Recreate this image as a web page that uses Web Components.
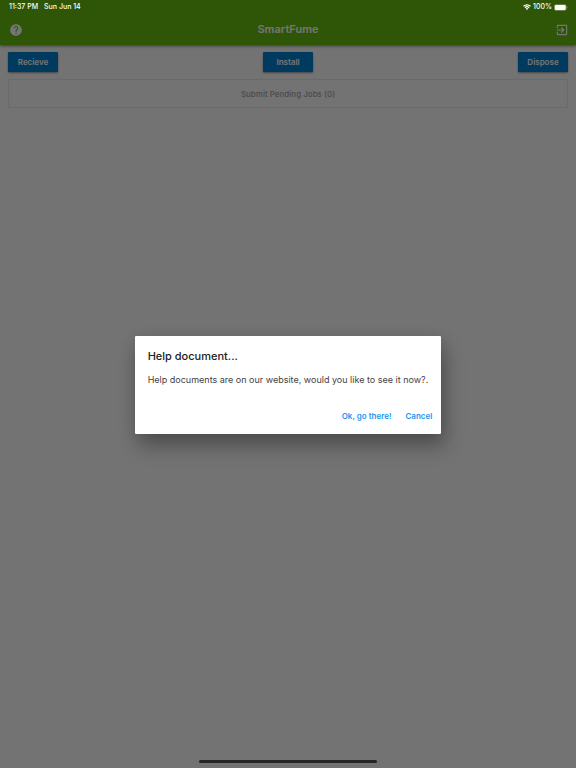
<!DOCTYPE html>
<html lang="en">
<head>
<meta charset="utf-8">
<meta name="viewport" content="width=device-width, initial-scale=1">
<title>SmartFume</title>
<style>
html, body { height: 100%; margin: 0; }
body { font-family: Inter, "Liberation Sans", sans-serif; font-size: 8px; background: #fafafa; }
</style>
</head>
<body>
<smart-app></smart-app>
<script>
function define(name, html) {
  const template = document.createElement('template');
  template.innerHTML = html;
  customElements.define(name, class extends HTMLElement {
    constructor() {
      super();
      this.attachShadow({ mode: 'open' }).append(template.content.cloneNode(true));
    }
  });
}

define('status-bar', `
<style>
:host { display: flex; justify-content: space-between; align-items: center; height: 14px; padding: 0 8px 0 9px; color: #fff; font-size: 7px; font-weight: 500; line-height: 14px; }
div { display: flex; align-items: center; gap: 6px; }
.right { gap: 2px; }
svg { display: block; }
</style>
<div><span>11:37 PM</span><span>Sun Jun 14</span></div>
<div class="right">
<svg width="8" height="6" viewBox="0 0 16 12" fill="none" stroke="#fff" stroke-width="2.4" aria-hidden="true"><path d="M1 4.500a10 10 0 0 1 14 0M3.800 7.400a6 6 0 0 1 8.400 0"/><path d="M8 12 5.400 9.300a3.800 3.800 0 0 1 5.200 0z" fill="#fff" stroke="none"/></svg>
<span>100%</span>
<svg width="14" height="7" viewBox="0 0 28 14" aria-hidden="true"><rect x=".5" y="1" width="24" height="12" rx="3.500" fill="none" stroke="#fff" stroke-opacity=".5"/><rect x="1.500" y="2" width="22" height="10" rx="2.500" fill="#fff"/><path d="M26 5q2 2 0 4z" fill="#fff" fill-opacity=".6"/></svg>
</div>`);

define('app-bar', `
<style>
:host { display: grid; grid-template-columns: 32px 1fr 32px; align-items: center; height: 31px; padding-top: 14px; background: #64bb0f; color: #fff; box-shadow: 0 1px 3px rgba(0,0,0,.5); }
h1 { margin: 0; font-size: 11px; line-height: 15px; font-weight: 600; text-align: center; }
button { box-sizing: border-box; display: flex; justify-content: center; align-items: center; height: 31px; margin: 0; padding: 0; border: 0; background: none; color: inherit; cursor: pointer; }
button:last-of-type { padding-left: 4px; }
</style>
<button aria-label="Help"><svg width="14" height="14" viewBox="0 0 24 24" fill="currentColor"><path d="M12 2C6.480 2 2 6.480 2 12s4.480 10 10 10 10-4.480 10-10S17.520 2 12 2zm1 17h-2v-2h2v2zm2.070-7.750-.9.920C13.450 12.900 13 13.500 13 15h-2v-.5c0-1.100.45-2.100 1.170-2.830l1.240-1.260c.37-.36.59-.86.59-1.410 0-1.100-.9-2-2-2s-2 .9-2 2H8c0-2.210 1.790-4 4-4s4 1.790 4 4c0 .88-.36 1.680-.93 2.250z"/></svg></button>
<h1><slot></slot></h1>
<button aria-label="Sign out"><svg width="14" height="14" viewBox="0 0 24 24" fill="currentColor"><path d="M10.090 15.590 11.500 17l5-5-5-5-1.410 1.410L12.670 11H3v2h9.670l-2.580 2.590zM19 3H5c-1.110 0-2 .9-2 2v4h2V5h14v14H5v-4H3v4c0 1.100.89 2 2 2h14c1.100 0 2-.9 2-2V5c0-1.100-.9-2-2-2z"/></svg></button>`);

define('raised-button', `
<style>
:host { display: block; }
button { box-sizing: border-box; display: block; min-width: 50px; height: 20px; margin: 0; padding: 0 9px; border: 0; border-radius: 1px; background: #0082cf; color: #fff; font: 600 8px/20px Inter, "Liberation Sans", sans-serif; box-shadow: 0 1px 2px rgba(0,0,0,.4); cursor: pointer; white-space: nowrap; }
</style>
<button><slot></slot></button>`);

define('pending-button', `
<style>
:host { display: block; }
button { box-sizing: border-box; width: 100%; height: 29px; display: block; margin: 0; padding: 0; border: 1px solid #e6e6e6; border-radius: 1px; background: none; color: #a3a3a3; font: 500 8px/26px Inter, "Liberation Sans", sans-serif; }
</style>
<button disabled><slot></slot></button>`);

define('text-button', `
<style>
:host { display: block; }
button { display: block; margin: 0; padding: 0; border: 0; background: none; color: #2196f3; font: 600 8px/18px Inter, "Liberation Sans", sans-serif; cursor: pointer; white-space: nowrap; }
</style>
<button><slot></slot></button>`);

define('alert-dialog', `
<style>
:host { display: block; box-sizing: border-box; width: fit-content; max-width: calc(100% - 40px); padding: 13px 9px 9px 13px; background: #fff; border-radius: 1px; box-shadow: 4px 13px 20px rgba(0,0,0,.27), 0 3px 16px rgba(0,0,0,.12); }
h2 { margin: 0 0 9px; font-size: 11px; line-height: 15px; font-weight: 500; color: #212121; }
p { margin: 0 4px 20px 0; font-size: 9px; line-height: 14px; color: #424242; }
.actions { display: flex; justify-content: flex-end; gap: 14px; }
</style>
<section role="dialog" aria-modal="true" aria-labelledby="title">
<h2 id="title"><slot name="title"></slot></h2>
<p><slot></slot></p>
<div class="actions"><slot name="actions"></slot></div>
</section>`);

define('smart-app', `
<style>
:host { display: grid; grid-template: minmax(100vh, auto) / 1fr; }
.page, .scrim { grid-area: 1 / 1; }
main { display: grid; gap: 7px; padding: 7px 8px; }
.actions { display: flex; justify-content: space-between; }
.scrim { z-index: 1; display: grid; grid-template-rows: 1fr auto 1fr; justify-items: center; background: rgba(0,0,0,.54); }
status-bar { width: 100%; box-sizing: border-box; }
alert-dialog { margin-top: 2px; }
.home { align-self: end; width: 31%; height: 3px; margin-bottom: 5px; border-radius: 2px; background: #262626; }
</style>
<div class="page">
<app-bar>SmartFume</app-bar>
<main>
<div class="actions"><raised-button>Recieve</raised-button><raised-button>Install</raised-button><raised-button>Dispose</raised-button></div>
<pending-button>Submit Pending Jobs (0)</pending-button>
</main>
</div>
<div class="scrim">
<status-bar></status-bar>
<alert-dialog><span slot="title">Help document...</span>Help documents are on our website, would you like to see it now?.<text-button slot="actions">Ok, go there!</text-button><text-button slot="actions">Cancel</text-button></alert-dialog>
<div class="home"></div>
</div>`);
</script>
</body>
</html>
